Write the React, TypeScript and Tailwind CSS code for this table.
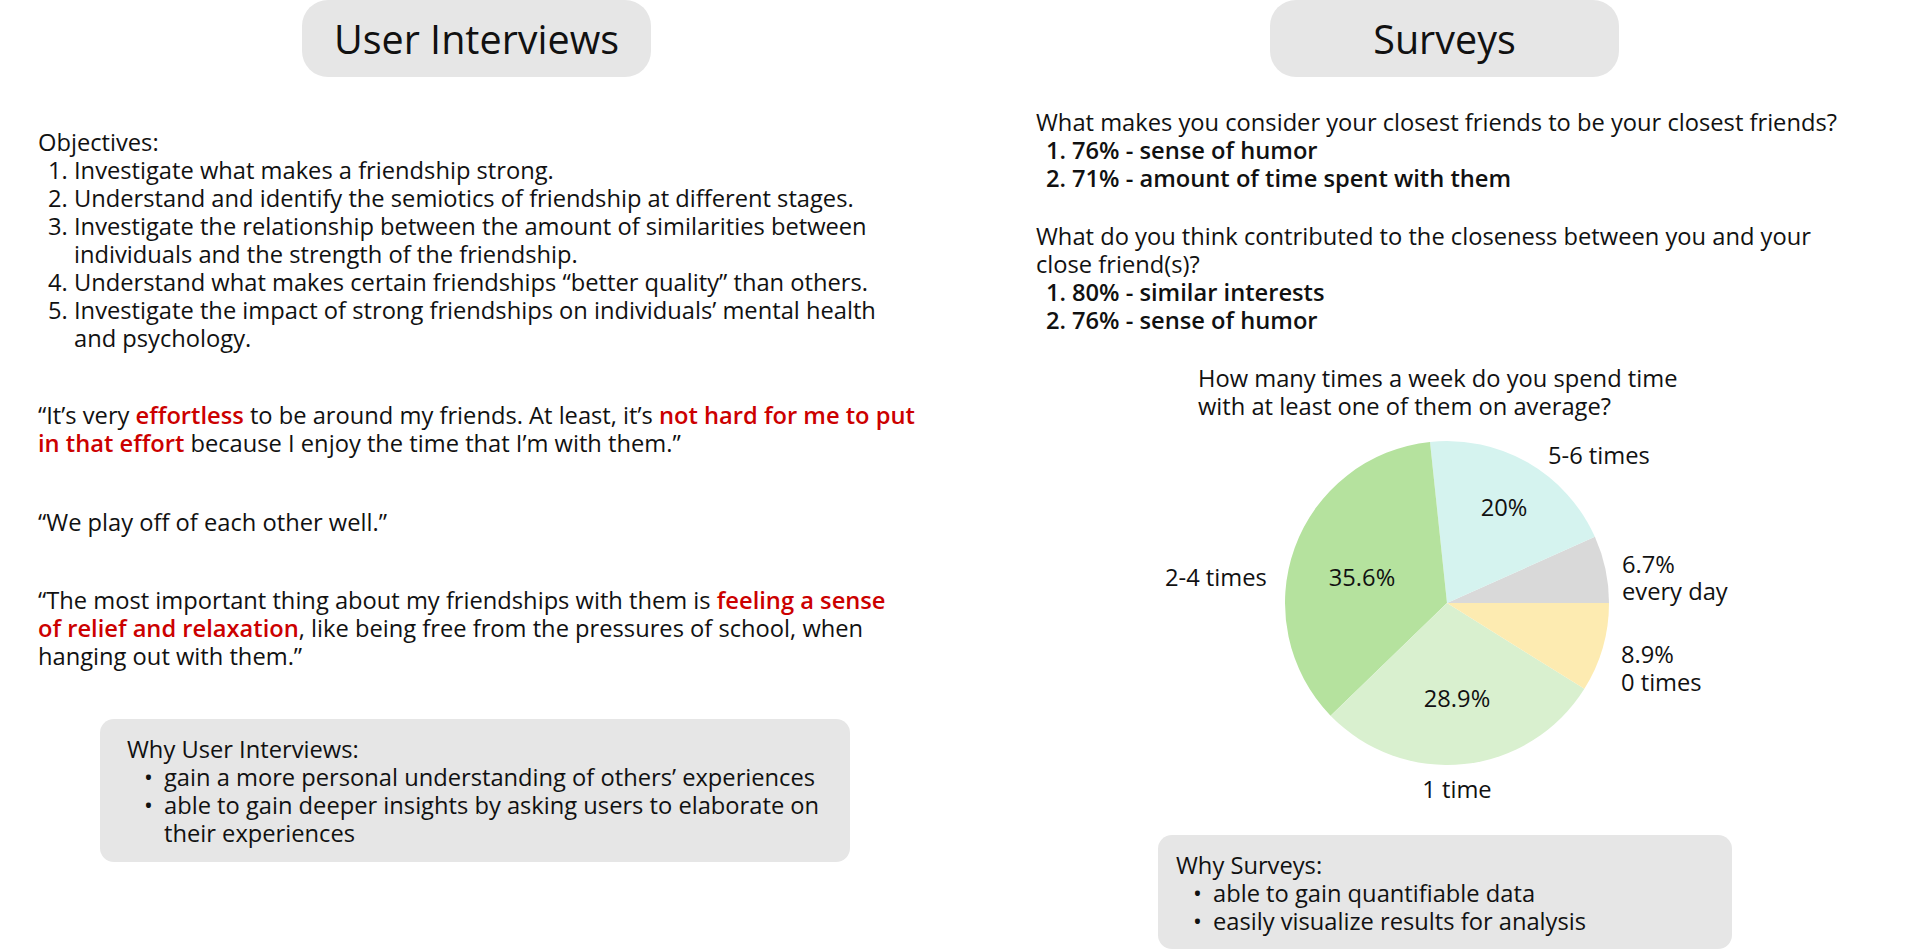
import React from "react";

function Num({ n, children, bold }: { n: string; children: React.ReactNode; bold?: boolean }) {
  return (
    <div className={bold ? "flex pl-[10px] font-semibold" : "flex pl-[10px]"}>
      <span className="w-[26px] shrink-0">{n}</span>
      <span>{children}</span>
    </div>
  );
}

function Bullet({ children }: { children: React.ReactNode }) {
  return (
    <div className="flex">
      <span className="w-[37px] pl-[17px] shrink-0">•</span>
      <span>{children}</span>
    </div>
  );
}

const R = ({ children }: { children: React.ReactNode }) => (
  <span className="font-semibold text-[#cc0000]">{children}</span>
);

function polar(cx: number, cy: number, r: number, deg: number) {
  const a = (deg * Math.PI) / 180;
  return [cx + r * Math.cos(a), cy - r * Math.sin(a)];
}

function slice(cx: number, cy: number, r: number, a0: number, a1: number) {
  const [x0, y0] = polar(cx, cy, r, a0);
  const [x1, y1] = polar(cx, cy, r, a1);
  const large = a1 - a0 > 180 ? 1 : 0;
  return `M ${cx} ${cy} L ${x0} ${y0} A ${r} ${r} 0 ${large} 0 ${x1} ${y1} Z`;
}

function Pie() {
  const cx = 297;
  const cy = 183;
  const r = 162;
  const data = [
    { v: 6.7, c: "#d9d9d9" },
    { v: 20, c: "#d5f3ef" },
    { v: 35.6, c: "#b5e29e" },
    { v: 28.9, c: "#d9f0cf" },
    { v: 8.9, c: "#fdebb1" },
  ];
  const total = data.reduce((s, d) => s + d.v, 0);
  let acc = 0;
  const paths = data.map((d, i) => {
    const a0 = (acc / total) * 360;
    acc += d.v;
    const a1 = (acc / total) * 360;
    return <path key={i} d={slice(cx, cy, r, a0, a1)} fill={d.c} />;
  });
  return (
    <svg width="600" height="400" viewBox="0 0 600 400" className="block text-[23.7px] fill-[#111]">
      {paths}
      <text x="398" y="44">5-6 times</text>
      <text x="354" y="96" textAnchor="middle">20%</text>
      <text x="15" y="166">2-4 times</text>
      <text x="212" y="166" textAnchor="middle">35.6%</text>
      <text x="472" y="153">6.7%</text>
      <text x="472" y="180">every day</text>
      <text x="471" y="243">8.9%</text>
      <text x="471" y="271">0 times</text>
      <text x="307" y="287" textAnchor="middle">28.9%</text>
      <text x="307" y="378" textAnchor="middle">1 time</text>
    </svg>
  );
}

export default function App() {
  return (
    <div className="flex w-[1920px] h-[949px] overflow-hidden bg-white text-[23.7px] leading-[28px] text-[#111] font-['Open_Sans','Liberation_Sans',sans-serif]">
      {/* Left column */}
      <div className="w-[960px] shrink-0 flex flex-col">
        <div className="ml-[302px] w-[349px] h-[77px] shrink-0 rounded-[26px] bg-[#e6e6e6] flex items-center justify-center text-[39.5px] leading-[48px]">
          User Interviews
        </div>

        <div className="mt-[51px] pl-[38px] whitespace-nowrap">
          <div>Objectives:</div>
          <Num n="1.">Investigate what makes a friendship strong.</Num>
          <Num n="2.">Understand and identify the semiotics of friendship at different stages.</Num>
          <Num n="3.">
            Investigate the relationship between the amount of similarities between
            <br />
            individuals and the strength of the friendship.
          </Num>
          <Num n="4.">Understand what makes certain friendships “better quality” than others.</Num>
          <Num n="5.">
            Investigate the impact of strong friendships on individuals’ mental health
            <br />
            and psychology.
          </Num>
        </div>

        <div className="mt-[49px] pl-[38px] whitespace-nowrap">
          “It’s very <R>effortless</R> to be around my friends. At least, it’s <R>not hard for me to put</R>
          <br />
          <R>in that effort</R> because I enjoy the time that I’m with them.”
        </div>

        <div className="mt-[51px] pl-[38px] whitespace-nowrap">“We play off of each other well.”</div>

        <div className="mt-[50px] pl-[38px] whitespace-nowrap">
          “The most important thing about my friendships with them is <R>feeling a sense</R>
          <br />
          <R>of relief and relaxation</R>, like being free from the pressures of school, when
          <br />
          hanging out with them.”
        </div>

        <div className="mt-[49px] ml-[100px] w-[750px] rounded-[14px] bg-[#e6e6e6] pt-[16px] pb-[15px] pl-[27px] whitespace-nowrap">
          <div>Why User Interviews:</div>
          <Bullet>gain a more personal understanding of others’ experiences</Bullet>
          <Bullet>
            able to gain deeper insights by asking users to elaborate on
            <br />
            their experiences
          </Bullet>
        </div>
      </div>

      {/* Right column */}
      <div className="flex-1 flex flex-col">
        <div className="ml-[310px] w-[349px] h-[77px] shrink-0 rounded-[26px] bg-[#e6e6e6] flex items-center justify-center text-[39.5px] leading-[48px]">
          Surveys
        </div>

        <div className="mt-[31px] pl-[76px] whitespace-nowrap">
          <div>What makes you consider your closest friends to be your closest friends?</div>
          <Num n="1." bold>76% - sense of humor</Num>
          <Num n="2." bold>71% - amount of time spent with them</Num>
        </div>

        <div className="mt-[30px] pl-[76px] whitespace-nowrap">
          <div>
            What do you think contributed to the closeness between you and your
            <br />
            close friend(s)?
          </div>
          <Num n="1." bold>80% - similar interests</Num>
          <Num n="2." bold>76% - sense of humor</Num>
        </div>

        <div className="mt-[30px] pl-[238px] whitespace-nowrap">
          How many times a week do you spend time
          <br />
          with at least one of them on average?
        </div>

        <div className="ml-[190px]">
          <Pie />
        </div>

        <div className="mt-[15px] ml-[198px] w-[574px] shrink-0 rounded-[14px] bg-[#e6e6e6] pt-[16px] pb-[14px] pl-[18px] whitespace-nowrap">
          <div>Why Surveys:</div>
          <Bullet>able to gain quantifiable data</Bullet>
          <Bullet>easily visualize results for analysis</Bullet>
        </div>
      </div>
    </div>
  );
}
